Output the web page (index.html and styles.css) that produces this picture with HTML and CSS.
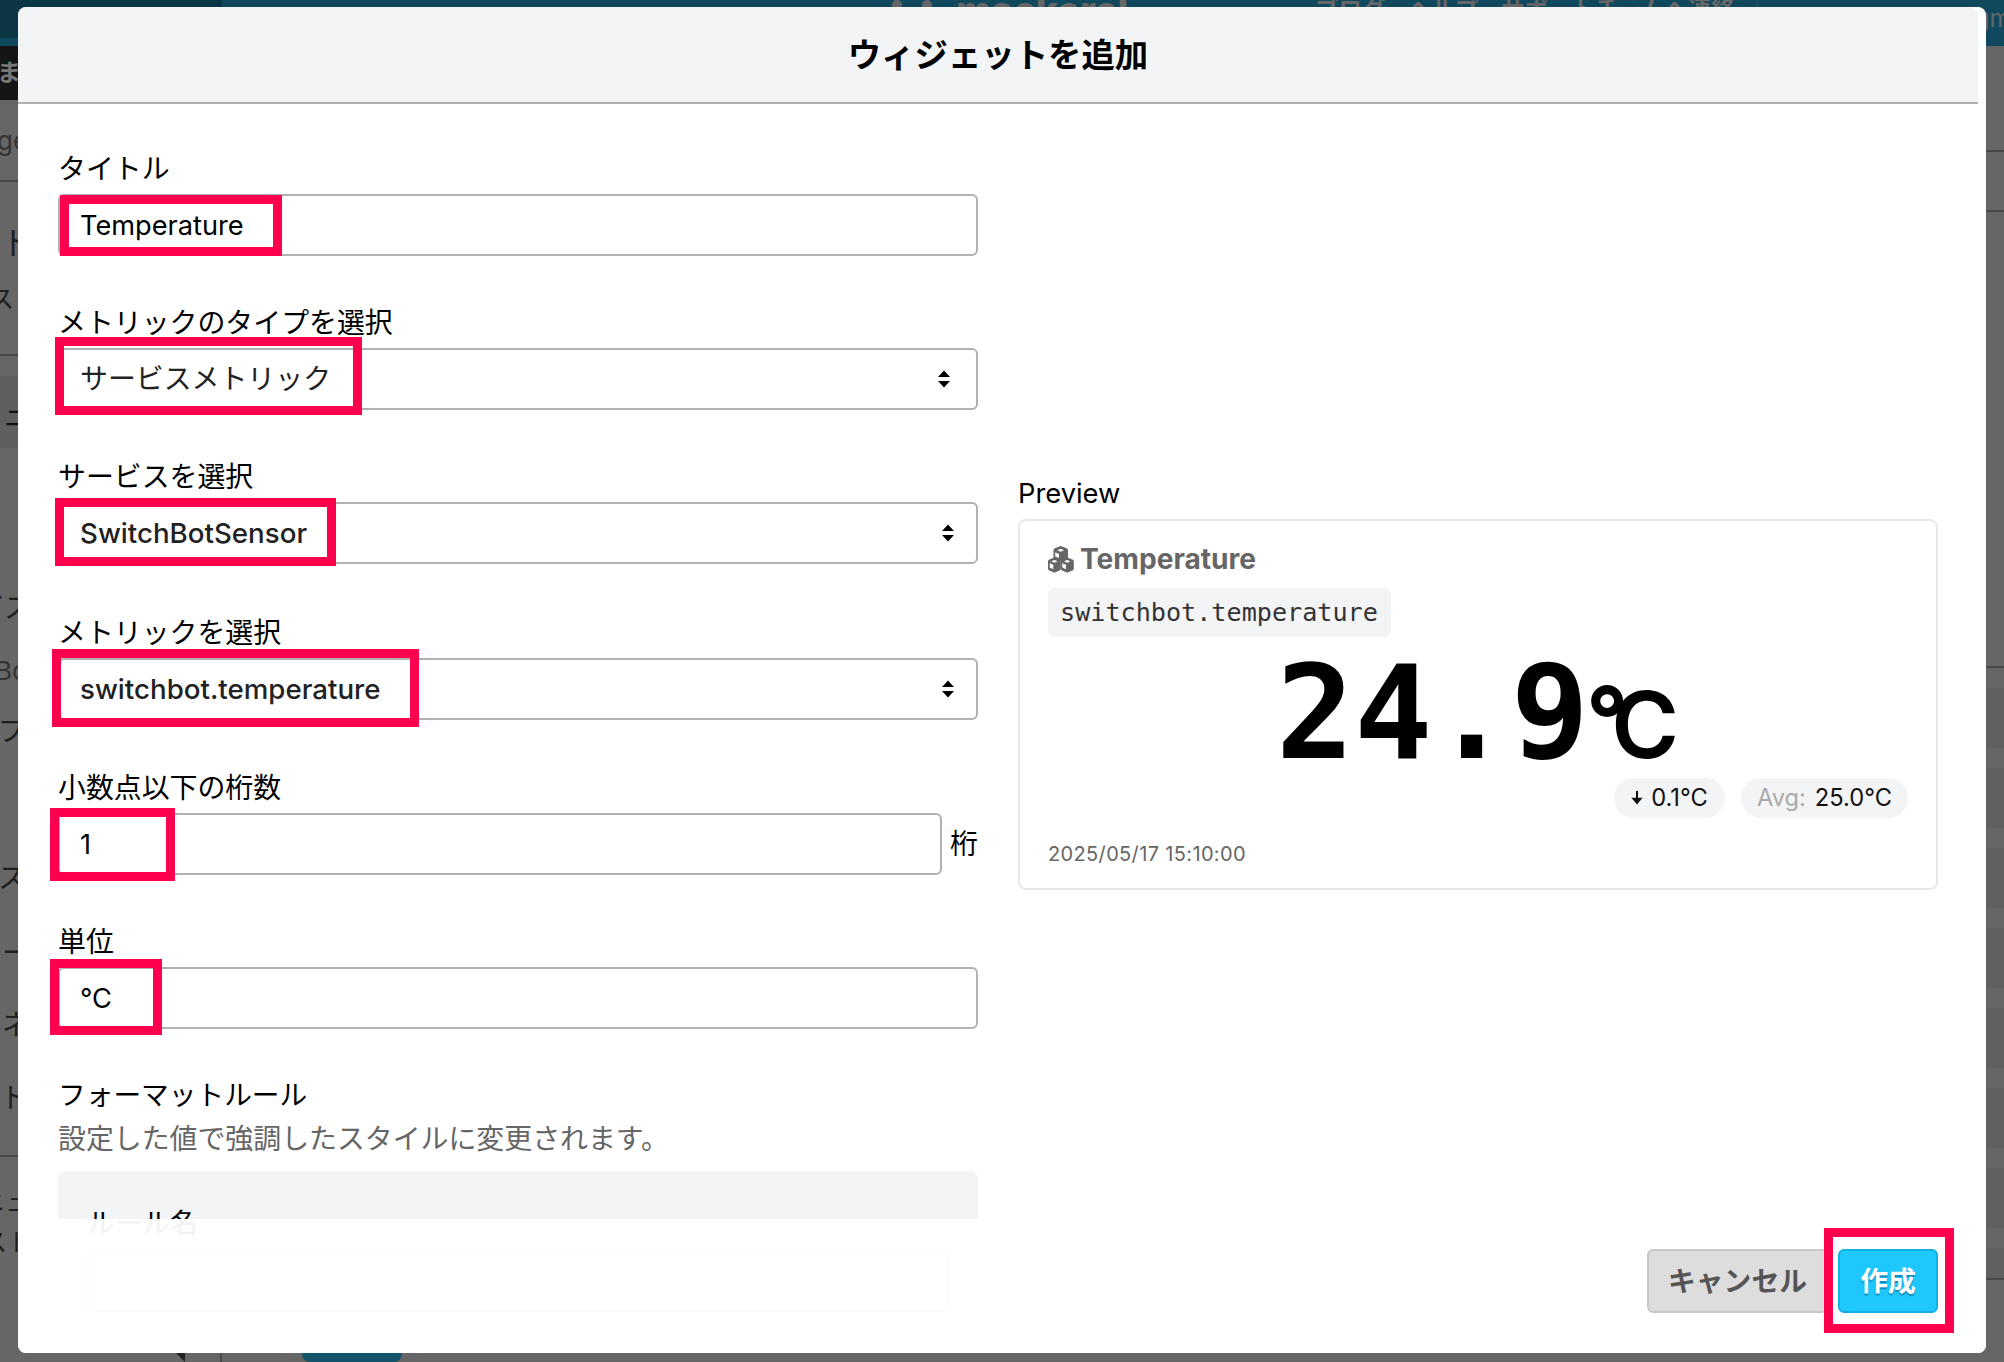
FILE: index.html
```html
<!DOCTYPE html>
<html lang="ja">
<head>
<meta charset="utf-8">
<title>ウィジェットを追加</title>
<link rel="stylesheet" href="styles.css">
</head>
<body>
<div class="page" aria-hidden="true">
  <header class="topbar">
    <div class="topbar-side"></div>
    <div class="brand"><i></i><i></i><span>mackerel</span></div>
    <nav class="topnav"><span>ブログ</span><span>ヘルプ</span><span>サポートチームへ連絡</span></nav>
    <div class="account">shijiikuma.life@gm</div>
  </header>
  <div class="page-body">
    <aside class="sidebar">
      <div class="org"><span>ま</span></div>
      <div class="row r-agent small">ge</div>
      <div class="row r-host big">ト</div>
      <div class="row r-list">ス</div>
      <div class="row r-gap"></div>
      <div class="row r-current">ュ</div>
      <div class="row r-service">ビス</div>
      <div class="row r-bot small">Bo</div>
      <div class="row r-a">プ</div>
      <div class="row r-b">ス</div>
      <div class="row r-c">ー</div>
      <div class="row r-d">ネ</div>
      <div class="row r-e">ト</div>
      <div class="row r-f">ニュ</div>
      <div class="row r-g">スト</div>
      <div class="collapse"><i></i></div>
    </aside>
    <main class="content">
      <div class="pane-a"></div>
      <div class="pane-b"></div>
      <div class="pane-c"></div>
      <div class="stripes"></div>
      <div class="page-action"></div>
    </main>
  </div>
</div>

<section class="modal">
  <header class="modal-head"><h1>ウィジェットを追加</h1></header>
  <div class="modal-body">
    <form class="form">
      <div class="field"><label>タイトル</label>
        <div class="control black">Temperature</div></div>
      <div class="field"><label>メトリックのタイプを選択</label>
        <div class="control first">サービスメトリック<svg class="sort" viewBox="0 0 12 18"><path d="M6 0.5 12 7H0zM6 17.5 0 11h12z"/></svg></div></div>
      <div class="field"><label>サービスを選択</label>
        <div class="control medium">SwitchBotSensor<svg class="sort" viewBox="0 0 12 18"><path d="M6 0.5 12 7H0zM6 17.5 0 11h12z"/></svg></div></div>
      <div class="field"><label>メトリックを選択</label>
        <div class="control medium">switchbot.temperature<svg class="sort" viewBox="0 0 12 18"><path d="M6 0.5 12 7H0zM6 17.5 0 11h12z"/></svg></div></div>
      <div class="field"><label>小数点以下の桁数</label>
        <div class="with-unit"><div class="control black">1</div><span>桁</span></div></div>
      <div class="field"><label>単位</label>
        <div class="control black">°C</div></div>
      <div class="rules">
        <label>フォーマットルール</label>
        <p>設定した値で強調したスタイルに変更されます。</p>
        <div class="rule"><label>ルール名</label><div class="control"></div></div>
      </div>
    </form>
    <div class="preview">
      <div class="preview-label">Preview</div>
      <article class="card">
        <h2><svg class="cubes" viewBox="0 0 26 27">
          <g fill="#666"><path d="M12.7 0 19.2 2.6 20 4V12l-7.3 3-7.2-3V4l.8-1.4z"/><path d="M6.4 11.5 12 13.8l.8 1.2v8l-.8 1.2-5.6 2.5L.7 24.2 0 23v-8l.7-1.2z"/><path d="M19.2 11.5 25 13.8l.8 1.2v8l-.8 1.2-5.8 2.5-5.7-2.5-.8-1.2v-8l.8-1.2z"/></g>
          <g fill="#fff"><path d="M12.6 2.8 16 4.3l-3.4 1.5-3.4-1.5zM7.2 6.3 11 8v4L7.2 10.4zM6.4 14 9.6 15.3 6.4 16.8 3.2 15.3zM1.7 17.2 5.3 18.8v4.4L1.7 21.6zM19.2 14l3.2 1.3-3.2 1.5-3.2-1.5zM14.3 17.2l3.7 1.6v4.4l-3.7-1.6z"/></g>
        </svg>Temperature</h2>
        <code>switchbot.temperature</code>
        <div class="value"><span>24.9</span><span class="degree">°</span><span class="unit">C</span></div>
        <div class="pills">
          <div class="pill delta"><svg class="arrow" viewBox="0 0 12 14"><path d="M6 0V9" stroke="#111" stroke-width="2"/><path d="M.4 6.8H11.6L6 13.5z" fill="#111"/></svg>0.1°C</div>
          <div class="pill average"><span class="muted">Avg:</span>25.0°C</div>
        </div>
        <time>2025/05/17 15:10:00</time>
      </article>
    </div>
  </div>
  <footer class="modal-foot">
    <button class="btn cancel" type="button">キャンセル</button>
    <button class="btn create" type="button">作成</button>
  </footer>
</section>

<div class="mark m-title"></div>
<div class="mark m-type"></div>
<div class="mark m-service"></div>
<div class="mark m-metric"></div>
<div class="mark m-digits"></div>
<div class="mark m-unit"></div>
<div class="mark m-create"></div>
</body>
</html>
```
FILE: styles.css
```css
* { box-sizing: border-box; }
body {
  margin: 0;
  width: 2004px;
  height: 1362px;
  overflow: hidden;
  position: relative;
  background: #666;
  color: #000;
  font: 27.9px/36px Inter, "Noto Sans CJK JP", sans-serif;
}
h1, h2, p { margin: 0; }
svg { display: block; flex: none; }

/* page behind the dialog */
.page { height: 1362px; overflow: hidden; }
.topbar {
  display: flex;
  height: 46px;
  background: #10495d;
  color: #666;
  font-weight: 700;
  overflow: hidden;
  white-space: nowrap;
}
.topbar > * { flex: none; }
.topbar-side { width: 222px; height: 38px; background: #0b3646; }
.brand { display: flex; width: 434px; margin-left: 670px; font-size: 37.8px; line-height: 40px; font-weight: 800; }
.brand i { width: 10px; height: 10px; border-radius: 50%; background: #666; margin-right: 20px; }
.brand i:nth-child(2) { margin-right: 24px; }
.brand span { margin-top: -10px; }
.topnav { display: flex; gap: 23px; font-size: 23.4px; line-height: 20px; width: 443px; margin: 0 0 26px -11px; border-right: 1px solid #34535f; }
.account { margin-left: 37px; font-size: 24.5px; line-height: 37px; font-weight: 400; }

.page-body { display: flex; }
.sidebar { width: 222px; height: 1316px; border-right: 2px solid #4c4c4c; color: #1f1f1f; overflow: hidden; }
.org { height: 54px; background: #151515; color: #777; font-size: 24px; font-weight: 700; line-height: 54px; }
.org span { margin-left: -3px; }
.row { padding-left: 2px; }
.small { color: #333; font-size: 26px; }
.r-agent { height: 82px; line-height: 82px; border-bottom: 2px solid #484848; padding-left: 0; text-indent: -3px; }
.big { font-size: 32px; padding-left: 1px; }
.r-host { height: 84px; line-height: 124px; }
.r-list { height: 90px; line-height: 66px; border-bottom: 2px solid #484848; font-size: 25px; padding: 0; text-indent: -11px; }
.r-gap { height: 20px; }
.r-current { height: 72px; line-height: 76px; background: #5f5f5f; font-size: 30px; color: #111; }
.r-service { height: 190px; line-height: 320px; text-indent: -26px; }
.r-bot { height: 63px; line-height: 66px; text-indent: -7px; }
.r-a { height: 58px; line-height: 60px; text-indent: -4px; }
.r-b { height: 162px; line-height: 238px; text-indent: -4px; }
.r-c { height: 66px; line-height: 64px; }
.r-d { height: 74px; line-height: 76px; }
.r-e { height: 96px; line-height: 74px; border-bottom: 2px solid #484848; text-indent: -2px; }
.r-f { height: 62px; line-height: 90px; font-size: 25px; text-indent: -22px; }
.r-g { height: 60px; line-height: 46px; font-size: 25px; text-indent: -20px; }
.collapse { display: flex; justify-content: flex-end; padding-top: 65px; }
.collapse i { border: 9px solid transparent; border-right: 9px solid #222; border-left: 0; margin-right: 35px; }

.content { flex: 1; }
.pane-a { height: 106px; border-bottom: 2px solid #484848; }
.pane-b { height: 60px; border-bottom: 2px solid #484848; }
.pane-c { height: 456px; border-bottom: 2px solid #484848; }
.stripes { height: 612px; border-bottom: 2px solid #484848; background: repeating-linear-gradient(#666 0 20px, #606060 20px 80px); }
.page-action { width: 100px; height: 80px; margin: 2px 0 0 80px; border-radius: 8px; background: #14536a; }

/* dialog */
.modal {
  position: absolute;
  left: 18px;
  top: 7px;
  width: 1968px;
  height: 1346px;
  border-radius: 8px;
  background: #fff;
  overflow: hidden;
}
.modal-head {
  display: flex;
  justify-content: center;
  width: 1960px;
  height: 97px;
  border-bottom: 2px solid #b0b0b5;
  border-radius: 8px 8px 0 0;
  background: #f3f4f6;
}
.modal-head h1 { font-size: 33.4px; line-height: 97px; font-weight: 700; }
.modal-body { display: flex; gap: 40px; height: 1249px; padding: 0 48px 0 40px; overflow: hidden; }
.form { width: 920px; padding-top: 45px; flex: none; }
.field { height: 154px; }
.field:nth-child(3) { height: 156px; }
.field:nth-child(4) { height: 155px; }
label { display: block; line-height: 36px; }
.field label { height: 45px; padding-top: 2px; }
.control {
  display: flex;
  align-items: center;
  justify-content: space-between;
  height: 62px;
  padding: 0 22px 0 20px;
  border: 2px solid #b0b0b5;
  border-radius: 6px;
  background: #fff;
  color: #222;
}
.control.first { padding-right: 26px; }
.medium { font-weight: 500; font-size: 27.7px; }
.black { color: #000; font-size: 27.2px; padding-top: 2px; }
.sort { width: 12px; height: 18px; }
.with-unit { display: flex; align-items: center; justify-content: space-between; }
.with-unit .control { width: 884px; }
.rules p { margin-top: 8px; color: #666; }
.rules > label { padding-top: 1px; font-size: 27.7px; }
.rule { height: 260px; margin-top: 14px; padding: 34px 29px; border-radius: 8px; background: #f3f4f6; }
.rule label { margin-bottom: 9px; font-size: 27.7px; }

.preview { width: 920px; padding-top: 371px; }
.preview-label { height: 44px; font-size: 27.3px; padding-top: 1px; }
.card { height: 371px; padding: 20px 28px; border: 2px solid #e8e8ea; border-radius: 8px; }
.card h2 { display: flex; align-items: center; gap: 6px; height: 36px; color: #666; font-size: 28.1px; font-weight: 700; }
.cubes { width: 26px; height: 27px; }
.card code {
  display: block;
  width: 343px;
  height: 49px;
  margin-top: 11px;
  padding-left: 12px;
  border-radius: 6px;
  background: #f3f4f6;
  color: #333;
  font: 25.15px/49px "DejaVu Sans Mono", monospace;
}
.value { display: flex; align-items: baseline; height: 141px; padding: 2px 0 0 228px; }
.value span { font: 700 130px/148px "DejaVu Sans Mono", monospace; }
.value .degree { font: 700 92px/148px Inter, sans-serif; margin: 0 -17px 0 -3px; transform: translateY(-6px); }
.value .unit { font: 600 92px/148px Inter, sans-serif; }
.pills { display: flex; justify-content: flex-end; gap: 16px; }
.pill { display: flex; align-items: center; justify-content: center; gap: 9px; height: 40px; border-radius: 20px; background: #f3f4f6; color: #111; font-size: 23.7px; }
.delta { width: 111px; gap: 8px; }
.average { width: 167px; }
.arrow { width: 12px; height: 14px; }
.muted { color: #aaa; }
.card time { display: block; margin-top: 19px; color: #666; font-size: 20px; line-height: 34px; letter-spacing: .35px; }

/* lies over the scrolled form */
.modal-foot {
  position: absolute;
  left: 0;
  right: 0;
  bottom: 0;
  height: 134px;
  padding: 30px 48px 0;
  display: flex;
  justify-content: flex-end;
  gap: 10px;
  background: rgba(255, 255, 255, .95);
}
.btn { height: 64px; border-radius: 6px; padding: 0; font: 700 27.8px/58px Inter, "Noto Sans CJK JP", sans-serif; }
.cancel { width: 181px; border: 2px solid #c8c8c8; background: #ddd; color: #555; }
.create { width: 100px; border: 2px solid #14b0e4; background: #1ec8ff; color: #fff; text-shadow: 0 2px 1px rgba(0, 80, 120, .5); }

/* highlight frames drawn over the controls */
.mark { position: absolute; border: 9.5px solid #ff004f; }
.m-title { left: 60px; top: 195px; width: 222px; height: 61px; }
.m-type { left: 55px; top: 337px; width: 307px; height: 78px; }
.m-service { left: 55px; top: 498px; width: 281px; height: 68px; }
.m-metric { left: 52px; top: 649px; width: 367px; height: 78px; }
.m-digits { left: 50px; top: 808px; width: 125px; height: 73px; }
.m-unit { left: 50px; top: 959px; width: 112px; height: 76px; }
.m-create { left: 1824px; top: 1228px; width: 130px; height: 105px; }
```
